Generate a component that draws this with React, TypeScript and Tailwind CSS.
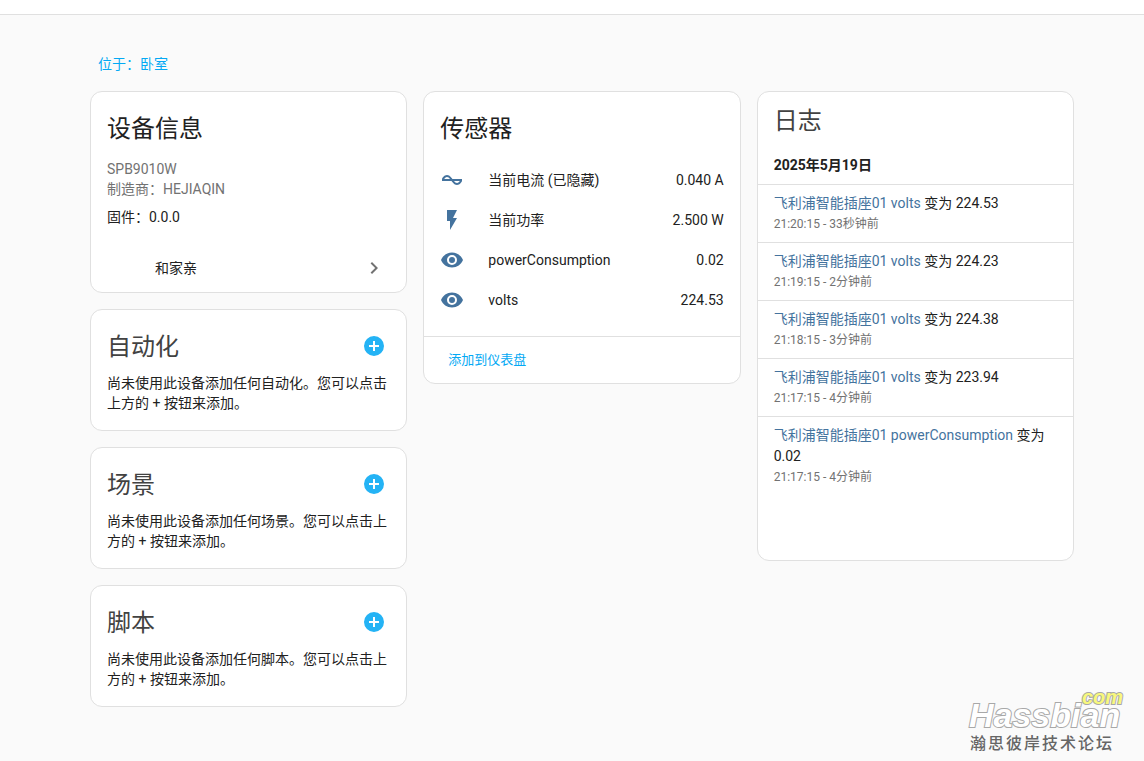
import React from "react";

interface Sensor {
  id: string;
  name: string;
  state: string;
  icon: string;
}

interface LogEntry {
  id: string;
  entity: string;
  value: string;
  when: string;
}

interface AddCardItem {
  id: string;
  title: string;
  text: string;
}

const ICONS = {
  currentAc:
    "M12.43 11C12.28 10.84 10 7 7 7S2.32 10.18 2 11V13H11.57C11.72 13.16 14 17 17 17S21.68 13.82 22 13V11H12.43M7 9C8.17 9 9.18 9.85 10 11H4.31C4.78 10.17 5.54 9 7 9M17 15C15.83 15 14.82 14.15 14 13H19.69C19.22 13.83 18.46 15 17 15Z",
  flash: "M7,2V13H10V22L17,10H13L17,2H7Z",
  eye: "M12,9A3,3 0 0,0 9,12A3,3 0 0,0 12,15A3,3 0 0,0 15,12A3,3 0 0,0 12,9M12,17A5,5 0 0,1 7,12A5,5 0 0,1 12,7A5,5 0 0,1 17,12A5,5 0 0,1 12,17M12,4.5C7,4.5 2.73,7.61 1,12C2.73,16.39 7,19.5 12,19.5C17,19.5 21.27,16.39 23,12C21.27,7.61 17,4.5 12,4.5Z",
  chevronRight: "M8.59,16.58L13.17,12L8.59,7.41L10,6L16,12L10,18L8.59,16.58Z",
  plusCircle:
    "M17,13H13V17H11V13H7V11H11V7H13V11H17M12,2A10,10 0 0,0 2,12A10,10 0 0,0 12,22A10,10 0 0,0 22,12A10,10 0 0,0 12,2Z",
};

const SENSORS: Sensor[] = [
  { id: "current", name: "当前电流 (已隐藏)", state: "0.040 A", icon: ICONS.currentAc },
  { id: "power", name: "当前功率", state: "2.500 W", icon: ICONS.flash },
  { id: "consumption", name: "powerConsumption", state: "0.02", icon: ICONS.eye },
  { id: "volts", name: "volts", state: "224.53", icon: ICONS.eye },
];

const LOG_ENTRIES: LogEntry[] = [
  { id: "log-1", entity: "飞利浦智能插座01 volts", value: "224.53", when: "21:20:15 - 33秒钟前" },
  { id: "log-2", entity: "飞利浦智能插座01 volts", value: "224.23", when: "21:19:15 - 2分钟前" },
  { id: "log-3", entity: "飞利浦智能插座01 volts", value: "224.38", when: "21:18:15 - 3分钟前" },
  { id: "log-4", entity: "飞利浦智能插座01 volts", value: "223.94", when: "21:17:15 - 4分钟前" },
  { id: "log-5", entity: "飞利浦智能插座01 powerConsumption", value: "0.02", when: "21:17:15 - 4分钟前" },
];

const ADD_CARDS: AddCardItem[] = [
  { id: "automation", title: "自动化", text: "尚未使用此设备添加任何自动化。您可以点击上方的 + 按钮来添加。" },
  { id: "scene", title: "场景", text: "尚未使用此设备添加任何场景。您可以点击上方的 + 按钮来添加。" },
  { id: "script", title: "脚本", text: "尚未使用此设备添加任何脚本。您可以点击上方的 + 按钮来添加。" },
];

function Icon({ path, className }: { path: string; className?: string }) {
  return (
    <svg viewBox="0 0 24 24" fill="currentColor" aria-hidden="true" className={`w-6 h-6 shrink-0 ${className ?? ""}`}>
      <path d={path} />
    </svg>
  );
}

function Card({ children, className }: { children: React.ReactNode; className?: string }) {
  return (
    <section className={`bg-white border border-[#e0e0e0] rounded-xl overflow-hidden ${className ?? ""}`}>
      {children}
    </section>
  );
}

function DeviceInfoCard() {
  return (
    <Card className="pt-3">
      <div className="px-4">
        <h1 className="text-2xl leading-[50px]">设备信息</h1>
        <div className="pt-[5px] text-[#727272]">
          <div>SPB9010W</div>
          <div>制造商：HEJIAQIN</div>
        </div>
        <div className="pt-2">固件：0.0.0</div>
      </div>
      <a href="#integration" className="mt-4 h-[49px] pl-16 pr-5 flex items-center justify-between">
        <span>和家亲</span>
        <Icon path={ICONS.chevronRight} className="text-[#727272]" />
      </a>
    </Card>
  );
}

function AddCard({ item }: { item: AddCardItem }) {
  return (
    <Card className="pt-3 pb-[17px]">
      <div className="pl-4 pr-5 flex items-start justify-between">
        <h1 className="text-2xl leading-[50px] text-[#424242]">{item.title}</h1>
        <button
          type="button"
          aria-label={`添加${item.title}`}
          className="h-12 flex items-center text-[#24b3f5] cursor-pointer"
        >
          <Icon path={ICONS.plusCircle} />
        </button>
      </div>
      <p className="px-4 pt-px">{item.text}</p>
    </Card>
  );
}

function SensorsCard() {
  return (
    <Card className="pt-3">
      <h1 className="px-4 text-2xl leading-[50px]">传感器</h1>
      <ul className="px-4 pt-[6px] pb-4">
        {SENSORS.map((sensor) => (
          <li key={sensor.id} className="h-10 flex items-center gap-6">
            <Icon path={sensor.icon} className="text-[#44739e]" />
            <span className="flex-1 min-w-0 truncate">{sensor.name}</span>
            <span>{sensor.state}</span>
          </li>
        ))}
      </ul>
      <div className="border-t border-[#e0e0e0] px-2 py-[5px]">
        <button type="button" className="h-9 px-4 text-[13px] text-[#03a9f4] cursor-pointer">
          添加到仪表盘
        </button>
      </div>
    </Card>
  );
}

function LogbookCard() {
  return (
    <Card className="min-h-[470px]">
      <h1 className="px-4 pt-1 text-2xl leading-[50px] text-[#424242]">日志</h1>
      <h4 className="px-4 py-[9px] font-bold">2025年5月19日</h4>
      <ul>
        {LOG_ENTRIES.map((entry) => (
          <li key={entry.id} className="border-t border-[#e0e0e0] px-4 py-2">
            <div className="leading-[21px]">
              <a href="#entity" className="text-[#44739e]">{entry.entity}</a> 变为 {entry.value}
            </div>
            <div className="text-xs leading-5 text-[#727272]">{entry.when}</div>
          </li>
        ))}
      </ul>
    </Card>
  );
}

function Watermark() {
  return (
    <div className="absolute right-5 bottom-[6px] w-[156px] pointer-events-none">
      <div className="relative pl-px font-['Liberation_Sans',sans-serif] font-bold italic text-[34px] leading-8 text-white [-webkit-text-stroke:2px_#a8a8a8] [paint-order:stroke_fill]">
        Hassbian
        <span className="absolute right-px -top-3 text-[20px] leading-5 text-[#f8f87c]">com</span>
      </div>
      <div className="pl-[2px] pt-[3px] pb-px text-base leading-5 font-medium tracking-[2px] text-[#666666] whitespace-nowrap">
        瀚思彼岸技术论坛
      </div>
    </div>
  );
}

export default function App() {
  return (
    <div className="relative min-h-screen bg-[#fafafa] text-[#212121] text-sm leading-5 font-['Roboto','Noto_Sans_CJK_SC',sans-serif]">
      <header className="h-[15px] bg-white border-b border-[#e0e0e0]" />

      <main className="pl-5 pt-[39px] pb-12">
        <div className="max-w-[984px] mx-auto">
          <a href="#area" className="block w-fit mx-2 text-[#03a9f4]">位于：卧室</a>

          <div className="mt-[17px] grid grid-cols-3 gap-4 items-start">
            <div className="flex flex-col gap-4">
              <DeviceInfoCard />
              {ADD_CARDS.map((item) => (
                <AddCard key={item.id} item={item} />
              ))}
            </div>
            <SensorsCard />
            <LogbookCard />
          </div>
        </div>
      </main>

      <Watermark />
    </div>
  );
}
